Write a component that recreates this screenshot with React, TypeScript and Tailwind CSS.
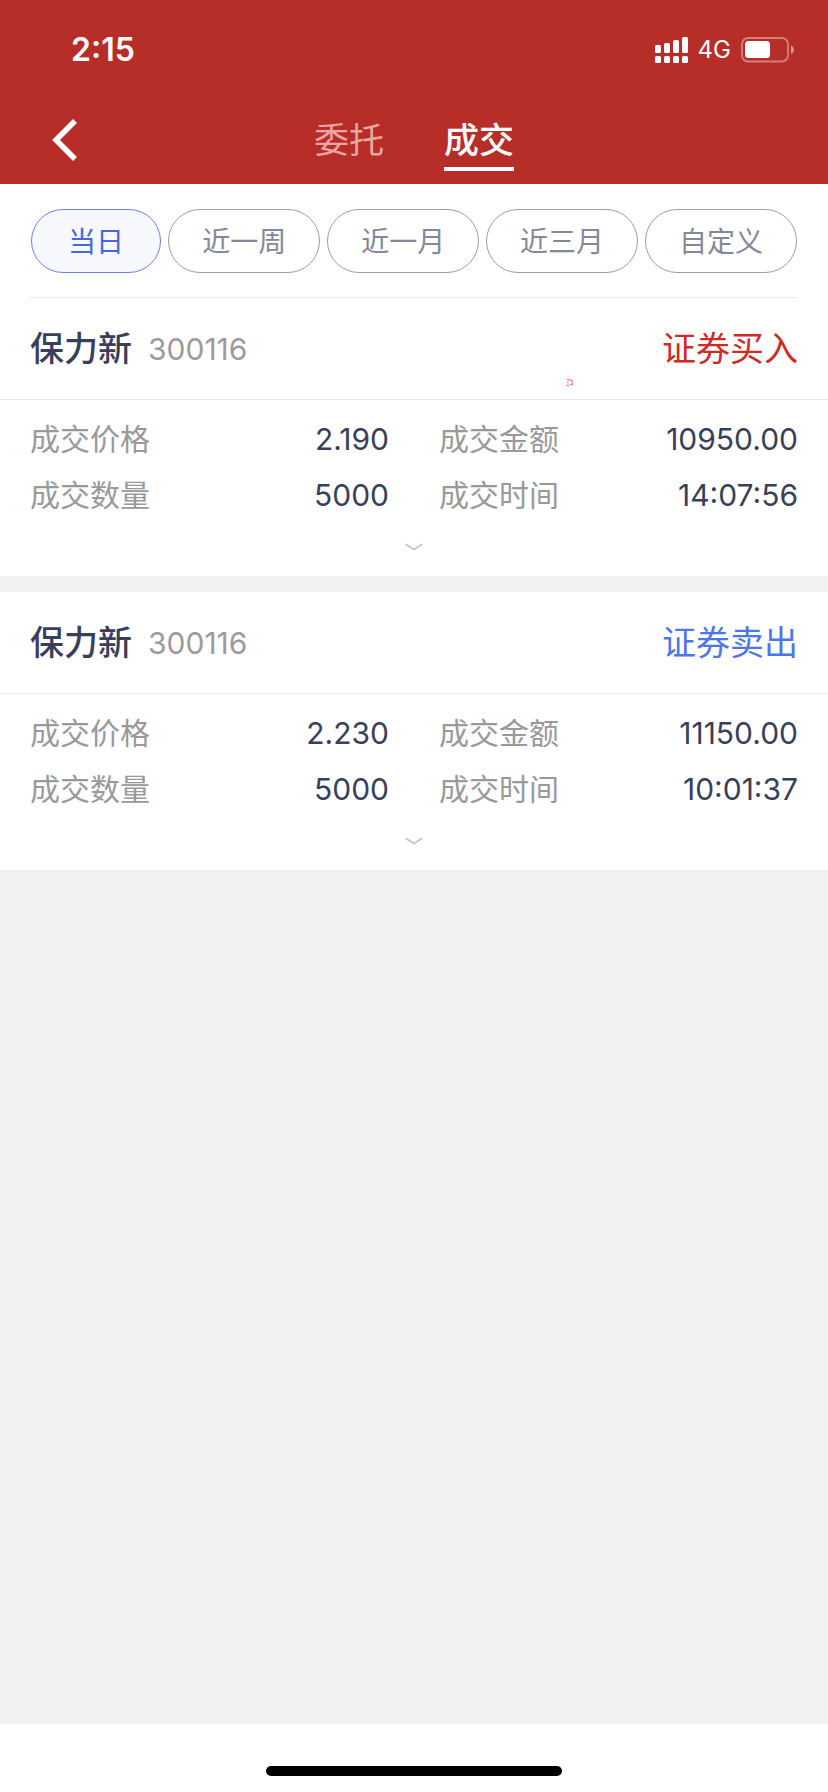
import { useState } from "react";

const tabs = ["委托", "成交"];

const ranges = ["当日", "近一周", "近一月", "近三月", "自定义"];

const deals = [
    {
        id: 1,
        name: "保力新",
        code: "300116",
        side: "buy",
        action: "证券买入",
        marked: true,
        fields: [
            { label: "成交价格", value: "2.190" },
            { label: "成交金额", value: "10950.00" },
            { label: "成交数量", value: "5000" },
            { label: "成交时间", value: "14:07:56" },
        ],
    },
    {
        id: 2,
        name: "保力新",
        code: "300116",
        side: "sell",
        action: "证券卖出",
        marked: false,
        fields: [
            { label: "成交价格", value: "2.230" },
            { label: "成交金额", value: "11150.00" },
            { label: "成交数量", value: "5000" },
            { label: "成交时间", value: "10:01:37" },
        ],
    },
];

function SignalIcon() {
    return (
        <svg width="33" height="26" viewBox="0 0 33 26" fill="currentColor" aria-hidden="true">
            <rect x="0" y="8" width="6" height="8" rx="1.5" />
            <rect x="9" y="6" width="6" height="10" rx="1.5" />
            <rect x="18" y="3" width="6" height="13" rx="1.5" />
            <rect x="27" y="0" width="6" height="16" rx="1.5" />
            <rect x="0" y="19" width="6" height="7" rx="1.5" />
            <rect x="9" y="19" width="6" height="7" rx="1.5" />
            <rect x="18" y="19" width="6" height="7" rx="1.5" />
            <rect x="27" y="19" width="6" height="7" rx="1.5" />
        </svg>
    );
}

function BatteryIcon() {
    return (
        <svg width="53" height="26" viewBox="0 0 53 26" aria-hidden="true">
            <rect x="1" y="1" width="46" height="23.5" rx="6" fill="none" stroke="#fff" strokeOpacity="0.4" strokeWidth="1.8" />
            <rect x="4" y="4" width="25" height="17" rx="3.5" fill="#fff" />
            <path d="M50 8.5c1.8.7 3 2.300 3 4.200s-1.200 3.500-3 4.200z" fill="#fff" fillOpacity="0.5" />
        </svg>
    );
}

function StatusBar() {
    return (
        <div className="h-24 pt-1 pl-[71px] pr-[34px] flex items-center justify-between">
            <span className="text-[32px] leading-10 font-semibold">2:15</span>
            <div className="flex items-center gap-[10px]">
                <SignalIcon />
                <span className="text-2xl leading-8">4G</span>
                <BatteryIcon />
            </div>
        </div>
    );
}

function DealCard({ deal }: { deal: (typeof deals)[number] }) {
    return (
        <article className="bg-white">
            <header className="relative h-[102px] px-[30px] flex items-center justify-between border-b border-[#e9e9e9]">
                <div className="flex items-center gap-4">
                    <h2 className="text-[34px] leading-10 font-medium text-[#3a3f59]">{deal.name}</h2>
                    <span className="text-[30px] leading-10 text-[#9b9b9b]">{deal.code}</span>
                </div>
                <span
                    className={`text-[34px] leading-10 ${deal.side === "buy" ? "text-[#cd2b25]" : "text-[#4f76e8]"}`}
                >
                    {deal.action}
                </span>
                {deal.marked && (
                    <svg className="absolute right-[254px] bottom-[12px]" width="8" height="9" viewBox="0 0 8 9" aria-hidden="true">
                        <path
                            d="M1 1.500h2.500M1 4.500h1.500M.5 7.500h2.500M3.500 3l1.500-1 2 2M4 6.500h3M6.500 4.500v2"
                            fill="none"
                            stroke="#ee6a50"
                            strokeOpacity="0.75"
                            strokeWidth="1.4"
                        />
                    </svg>
                )}
            </header>

            <dl className="px-[30px] pt-[11px] grid grid-cols-2 gap-x-[50px]">
                {deal.fields.map((field) => (
                    <div key={field.label} className="h-14 flex items-center justify-between text-[30px] leading-10">
                        <dt className="text-[#999]">{field.label}</dt>
                        <dd className="text-[#3a3f59]">{field.value}</dd>
                    </div>
                ))}
            </dl>

            <div className="pb-[5px]">
                <button type="button" aria-label="展开" className="w-full h-12 flex items-center justify-center">
                    <svg width="18" height="8" viewBox="0 0 18 8" fill="none" stroke="#c3c4cc" strokeWidth="1.8" aria-hidden="true">
                        <path d="M.7 1.200 9 6.500l8.300-5.300" />
                    </svg>
                </button>
            </div>
        </article>
    );
}

export default function App() {
    const [activeTab, setActiveTab] = useState("成交");
    const [activeRange, setActiveRange] = useState("当日");

    return (
        <div className="min-h-screen flex flex-col bg-[#f1f1f1] font-['Inter','Noto_Sans_CJK_SC',sans-serif]">
            <header className="bg-[#b72d28] text-white">
                <StatusBar />
                <nav className="h-[88px] grid grid-cols-[1fr_auto_1fr] items-center">
                    <button type="button" aria-label="返回" className="pl-[52px] justify-self-start">
                        <svg width="26" height="42" viewBox="0 0 26 42" fill="none" stroke="currentColor" strokeWidth="5.500" aria-hidden="true">
                            <path d="M23 2 4 21l19 19" />
                        </svg>
                    </button>
                    <div className="flex gap-[60px]">
                        {tabs.map((tab) => (
                            <button
                                key={tab}
                                type="button"
                                onClick={() => setActiveTab(tab)}
                                className={`h-[62px] border-y-4 border-t-transparent text-[35px] leading-10 ${activeTab === tab
                                    ? "border-b-white font-medium"
                                    : "border-b-transparent text-[#eba5a3]"
                                    }`}
                            >
                                {tab}
                            </button>
                        ))}
                    </div>
                </nav>
            </header>

            <main className="flex-1">
                {/* Date range */}
                <div className="bg-white px-[30px]">
                    <div className="px-px pt-[25px] pb-6 grid grid-cols-[6fr_7fr_7fr_7fr_7fr] gap-[7px] border-b border-[#e9e9e9]">
                        {ranges.map((range) => (
                            <button
                                key={range}
                                type="button"
                                onClick={() => setActiveRange(range)}
                                className={`h-16 pt-px rounded-full border text-[28px] leading-10 ${activeRange === range
                                    ? "border-[#6d83e6] bg-[#f6f8fd] text-[#4a66dc]"
                                    : "border-[#9c9dab] text-[#85889a]"
                                    }`}
                            >
                                {range}
                            </button>
                        ))}
                    </div>
                </div>

                <div className="flex flex-col gap-4">
                    {deals.map((deal) => (
                        <DealCard key={deal.id} deal={deal} />
                    ))}
                </div>
            </main>

            {/* Home indicator */}
            <footer className="h-[68px] pb-4 bg-white flex items-end justify-center">
                <div className="w-[296px] h-[10px] rounded-full bg-black" />
            </footer>
        </div>
    );
}
